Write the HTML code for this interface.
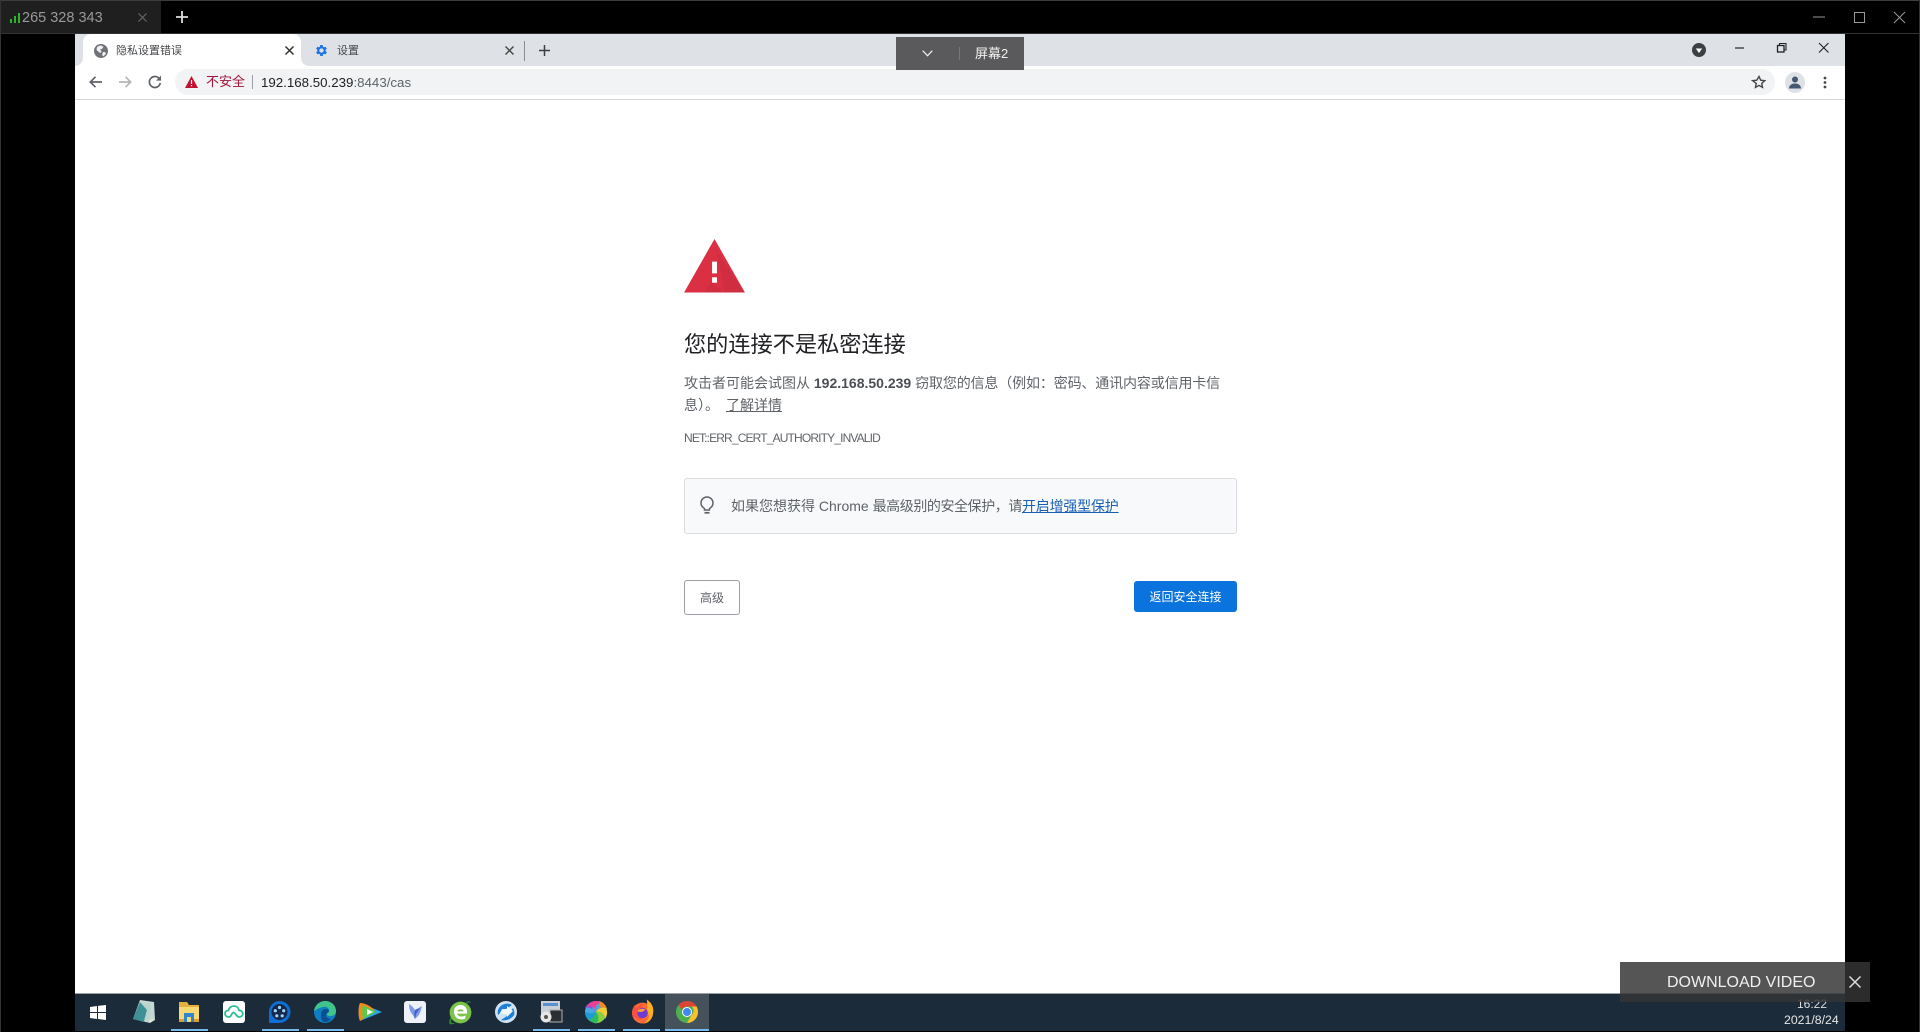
<!DOCTYPE html>
<html lang="zh"><head><meta charset="utf-8"><title>隐私设置错误</title>
<style>
*{margin:0;padding:0;box-sizing:border-box}
html,body{width:1920px;height:1032px;overflow:hidden;background:#000}
body{position:relative;font-family:"Liberation Sans","Noto Sans CJK SC",sans-serif;color:#202124;filter:blur(.3px)}
.a{position:absolute;white-space:nowrap}
svg{position:absolute;overflow:visible}
</style></head><body>
<!-- outer frame -->
<div class="a" style="left:0;top:0;width:1920px;height:1px;background:#3c3c3c"></div>
<div class="a" style="left:0;top:1px;width:161px;height:32px;background:#1f1f1f"></div>
<div class="a" style="left:0;top:33px;width:1920px;height:1px;background:#333"></div>
<div class="a" style="left:0;top:0;width:1px;height:1032px;background:#333"></div>
<div class="a" style="left:1919px;top:0;width:1px;height:1032px;background:#333"></div>
<svg style="left:9px;top:11px" width="12" height="13"><path d="M1 8h2v4H1zM5 5h2v7H5zM9 2h2v10H9z" fill="#2fb32f"/></svg>
<div class="a" style="left:22px;top:2px;line-height:33px;font-size:14.5px;color:#999">265 328 343</div>
<svg style="left:138px;top:13px" width="9" height="9"><path d="M.5.5l8 8M8.500.5l-8 8" stroke="#666" stroke-width="1.200"/></svg>
<svg style="left:176px;top:11px" width="12" height="12"><path d="M6 0v12M0 6h12" stroke="#ddd" stroke-width="1.800"/></svg>
<svg style="left:1813px;top:16px" width="12" height="2"><path d="M0 1h12" stroke="#999"/></svg>
<svg style="left:1854px;top:12px" width="10" height="10"><rect x=".5" y=".5" width="10" height="10" fill="none" stroke="#999"/></svg>
<svg style="left:1894px;top:12px" width="10" height="10"><path d="M0 0l11 11M11 0L0 11" stroke="#999"/></svg>

<!-- chrome window -->
<div class="a" style="left:75px;top:34px;width:1770px;height:959px;background:#fff"></div>
<div class="a" style="left:75px;top:34px;width:1770px;height:32px;background:#dee1e6"></div>
<div class="a" style="left:83px;top:34px;width:218px;height:32px;background:#fff;border-radius:8px 8px 0 0"></div>
<div class="a" style="left:75px;top:58px;width:8px;height:8px;background:#fff"></div>
<div class="a" style="left:75px;top:58px;width:8px;height:8px;background:#dee1e6;border-radius:0 0 8px 0"></div>
<div class="a" style="left:301px;top:58px;width:8px;height:8px;background:#fff"></div>
<div class="a" style="left:301px;top:58px;width:8px;height:8px;background:#dee1e6;border-radius:0 0 0 8px"></div>
<svg style="left:94px;top:44px" width="14" height="14" viewBox="0 0 14 14"><circle cx="7" cy="7" r="7" fill="#6f7276"/><path d="M7 1.500c-1.500 0-3 .7-4 1.800L2.500 6l3 2.500 1 .5 1-1.500L6 5.500 8 5l1.500-2.200zM9 8l-1 3 1.500 1.300 2.500-2.500L11 8z" fill="#fff" opacity=".9"/></svg>
<div class="a" style="left:116px;top:41px;line-height:20px;font-size:11px;color:#45474a">隐私设置错误</div>
<svg style="left:285px;top:46px" width="9" height="9"><path d="M.5.500l8 8M8.500.500l-8 8" stroke="#333" stroke-width="1.500"/></svg>
<svg style="left:314px;top:43px" width="15" height="15" viewBox="0 0 24 24"><path fill="#1a73e8" d="M19.400 13a7.500 7.500 0 000-2l2.100-1.600-2-3.500-2.500 1a7.500 7.500 0 00-1.700-1L15 3.200h-4l-.4 2.700a7.500 7.500 0 00-1.700 1l-2.500-1-2 3.500L6.500 11a7.500 7.500 0 000 2l-2.100 1.600 2 3.500 2.500-1a7.500 7.500 0 001.700 1l.4 2.700h4l.4-2.700a7.500 7.500 0 001.700-1l2.500 1 2-3.500zM13 15.500a3.500 3.500 0 110-7 3.500 3.500 0 010 7z" transform="translate(-1 0)"/></svg>
<div class="a" style="left:337px;top:41px;line-height:20px;font-size:11px;color:#45474a">设置</div>
<svg style="left:505px;top:46px" width="9" height="9"><path d="M.5.500l8 8M8.500.500l-8 8" stroke="#444" stroke-width="1.400"/></svg>
<div class="a" style="left:524px;top:41px;width:1px;height:20px;background:#8a8d91"></div>
<svg style="left:539px;top:45px" width="11" height="11"><path d="M5.500 0v11M0 5.500h11" stroke="#3c4043" stroke-width="1.500"/></svg>

<svg style="left:1692px;top:43px" width="14" height="14"><circle cx="7" cy="7" r="7" fill="#3c4043"/><path d="M3.800 5.500h6.400L7 10z" fill="#fff"/></svg>
<svg style="left:1735px;top:47px" width="10" height="2"><path d="M0 1h9" stroke="#333" stroke-width="1.300"/></svg>
<svg style="left:1777px;top:43px" width="10" height="10"><path d="M2.500 2V.5h6.500V7H7.500" fill="none" stroke="#222" stroke-width="1.100"/><rect x=".5" y="2.500" width="6.500" height="6.500" fill="none" stroke="#222" stroke-width="1.300"/></svg>
<svg style="left:1819px;top:43px" width="9" height="9"><path d="M0 0l9.500 9.500M9.500 0L0 9.500" stroke="#222" stroke-width="1.100"/></svg>

<!-- toolbar -->
<svg style="left:89px;top:76px" width="13" height="12"><path d="M13 6H1.500M6.500 .8L1.300 6l5.200 5.200" fill="none" stroke="#5f6368" stroke-width="1.700"/></svg>
<svg style="left:119px;top:76px" width="13" height="12"><path d="M0 6h11.500M6.500 .8L11.700 6l-5.200 5.200" fill="none" stroke="#b4b6b9" stroke-width="1.700"/></svg>
<svg style="left:148px;top:75px" width="14" height="14" viewBox="0 0 14 14"><path d="M11.800 4.500A5.500 5.500 0 1012.300 8" fill="none" stroke="#5f6368" stroke-width="1.700"/><path d="M13 .6v5H8z" fill="#5f6368"/></svg>
<div class="a" style="left:175px;top:69px;width:1600px;height:26px;background:#f1f3f4;border-radius:13px"></div>
<svg style="left:185px;top:76px" width="13" height="12"><path d="M6.500 0L13 12H0z" fill="#c5102f"/><path d="M5.900 4h1.200v4H5.900zM5.900 9h1.200v1.300H5.900z" fill="#fff"/></svg>
<div class="a" style="left:206px;top:72px;line-height:20px;font-size:13px;color:#a5143c">不安全</div>
<div class="a" style="left:252px;top:75px;width:1px;height:14px;background:#9aa0a6"></div>
<div class="a" style="left:261px;top:73px;line-height:20px;font-size:13.300px;color:#202124">192.168.50.239<span style="color:#5f6368">:8443/cas</span></div>
<svg style="left:1752px;top:75px" width="14" height="14" viewBox="0 0 24 24"><path d="M12 2.500l2.900 6.400 7 .8-5.200 4.700 1.400 6.900-6.100-3.500-6.100 3.500 1.400-6.900L1.100 9.700l7-.8z" fill="none" stroke="#45474a" stroke-width="2.400"/></svg>
<div class="a" style="left:1785px;top:72px;width:20px;height:21px;border-radius:50%;background:#dee1e6"></div>
<svg style="left:1789px;top:76px" width="12" height="13"><circle cx="6" cy="3.500" r="3" fill="#44586f"/><path d="M0 12.500c0-3.500 3-5 6-5s6 1.500 6 5z" fill="#44586f"/></svg>
<svg style="left:1823px;top:76px" width="4" height="13"><circle cx="2" cy="2" r="1.400" fill="#45474a"/><circle cx="2" cy="6.500" r="1.400" fill="#45474a"/><circle cx="2" cy="11" r="1.400" fill="#45474a"/></svg>
<div class="a" style="left:75px;top:99px;width:1770px;height:1px;background:#d6d8da"></div>

<!-- interstitial -->
<svg style="left:684px;top:239px" width="61" height="54" viewBox="0 0 62 55"><path d="M31 0L0 54.500h62z" fill="#db3044"/><path d="M33.500 13l8 41.500h20zM28 43l11.500 11.500H20z" fill="#c62c3f" opacity=".55"/><path d="M28.500 23h5v12h-5zM28.500 39h5v5.500h-5z" fill="#fff"/></svg>
<div class="a" style="left:684px;top:329px;line-height:32px;font-size:22.200px;color:#202124">您的连接不是私密连接</div>
<div class="a" style="left:684px;top:372px;line-height:22px;font-size:14px;color:#5f6368">攻击者可能会试图从 <b style="color:#4b4f54">192.168.50.239</b> <span style="letter-spacing:-.14px">窃取您的信息（例如：密码、通讯内容或信用卡信</span><br>息）。<u style="margin-left:7px">了解详情</u></div>
<div class="a" style="left:684px;top:430px;line-height:16px;font-size:12px;color:#5f6368;letter-spacing:-.85px">NET::ERR_CERT_AUTHORITY_INVALID</div>
<div class="a" style="left:684px;top:478px;width:553px;height:56px;background:#f8f9fa;border:1px solid #dadce0;border-radius:3px"></div>
<svg style="left:700px;top:496px" width="14" height="19" viewBox="0 0 14 19"><path d="M4.500 12.500C2.500 11.300 1 9.500 1 7a6 6 0 0112 0c0 2.500-1.500 4.300-3.500 5.500v1.500h-5z" fill="none" stroke="#5f6368" stroke-width="1.500"/><path d="M4.500 16.800h5" stroke="#5f6368" stroke-width="1.700"/></svg>
<div class="a" style="left:731px;top:496px;line-height:20px;font-size:14px;color:#5f6368">如果您想获得 Chrome <span style="letter-spacing:-.42px">最高级别的安全保护，请</span><u style="color:#1a5fb4;letter-spacing:-.2px">开启增强型保护</u></div>
<div class="a" style="left:684px;top:580px;width:56px;height:35px;border:1px solid #9aa0a6;border-radius:3px;background:#fff;text-align:center;line-height:34px;font-size:12px;color:#5f6368">高级</div>
<div class="a" style="left:1134px;top:581px;width:103px;height:31px;border-radius:3px;background:#0b73dd;text-align:center;line-height:32px;font-size:12px;color:#fff">返回安全连接</div>

<!-- screen selector -->
<div class="a" style="left:896px;top:37px;width:128px;height:33px;background:#5a5a5c"></div>
<svg style="left:922px;top:50px" width="11" height="7"><path d="M.7.700l4.800 5 4.800-5" fill="none" stroke="#eee" stroke-width="1.200"/></svg>
<div class="a" style="left:959px;top:47px;width:1px;height:13px;background:#777"></div>
<div class="a" style="left:975px;top:44px;line-height:20px;font-size:13px;color:#f2f2f2">屏幕2</div>

<!-- taskbar -->
<div class="a" style="left:75px;top:993px;width:1770px;height:38px;background:#1c2b39;border-top:1px solid #9aa0a6"></div>
<div class="a" style="left:665px;top:994px;width:44px;height:37px;background:#45525c"></div>
<div class="a" style="left:171px;top:1029px;width:37px;height:2px;background:#76b9ed"></div>
<div class="a" style="left:262px;top:1029px;width:37px;height:2px;background:#76b9ed"></div>
<div class="a" style="left:307px;top:1029px;width:37px;height:2px;background:#76b9ed"></div>
<div class="a" style="left:533px;top:1029px;width:37px;height:2px;background:#76b9ed"></div>
<div class="a" style="left:578px;top:1029px;width:37px;height:2px;background:#76b9ed"></div>
<div class="a" style="left:623px;top:1029px;width:37px;height:2px;background:#76b9ed"></div>
<div class="a" style="left:665px;top:1029px;width:44px;height:2px;background:#76b9ed"></div>

<svg style="left:90px;top:1005px" width="16" height="15"><path d="M0 2l7-1v6H0zM8 .9L16 0v7H8zM0 8h7v6l-7-1zM8 8h8v7l-8-1z" fill="#fff"/></svg>
<svg style="left:133px;top:1000px" width="22" height="24" viewBox="0 0 22 24"><path d="M7 0l14 2 1 18-5 3L0 19z" fill="#c5d8d4"/><path d="M7 2L0 19l11 3 3-12z" fill="#3f8f96"/><path d="M8 3l10 1-1 15-6 2 3-11z" fill="#b9d4cf"/><path d="M16 20l5-1-4 4z" fill="#e8e6c0"/></svg>
<svg style="left:179px;top:1000px" width="20" height="23"><path d="M0 2h8l2 3h10v17H0z" fill="#e5b040"/><path d="M0 7h20v15H0z" fill="#f9d976"/><path d="M5 13h10v9h-3v-5H8v5H5z" fill="#2f86cc"/><path d="M0 19h5v3H0zM15 19h5v3h-5z" fill="#e0a030"/></svg>
<svg style="left:223px;top:1001px" width="22" height="22"><rect width="22" height="22" rx="3" fill="#fff"/><path d="M6 16c-2.500 0-4-1.500-4-3.500S3.500 9.500 5.500 9.500C6 6.500 8.500 5 11 5s4.500 1.700 5 4.300c2.200 .2 3.800 1.500 3.800 3.500S18 16 16 16c-2.500 0-3.500-4.500-5.500-4.500S8.500 16 6 16z" fill="none" stroke="#2fbf94" stroke-width="1.800"/></svg>
<svg style="left:268px;top:1001px" width="23" height="24"><path d="M11.500 0a11 11 0 110 22H1v-10.500A11 11 0 0111.500 0z" fill="#0b6fd6"/><circle cx="11.500" cy="11" r="8" fill="#16284a"/><g fill="#9ed3f5"><circle cx="11.500" cy="6.500" r="1.600"/><circle cx="7.300" cy="9.700" r="1.600"/><circle cx="15.700" cy="9.700" r="1.600"/><circle cx="8.800" cy="14.800" r="1.600"/><circle cx="14.200" cy="14.800" r="1.600"/></g></svg>
<svg style="left:314px;top:1001px" width="22" height="22" viewBox="0 0 22 22"><circle cx="11" cy="11" r="11" fill="#0f7fc4"/><path d="M0 10C1 3 7 0 11 0c6 0 11 4 11 10 0 4-3 5-6 5-2 0-3-1-3-2 0-2 2-2 2-4 0-2-3-4-6-3C5 7 3 8 0 10z" fill="#3fc48b"/><path d="M7 13c0-3 2-5 5-5 2 0 3 1 3 2 0 2-3 2-3 4 0 2 2 4 5 4-2 2-4 3-6 3-4 0-4-5-4-8z" fill="#0a4f8f"/></svg>
<svg style="left:358px;top:1002px" width="24" height="20" viewBox="0 0 24 20"><path d="M2 1l22 9L2 19C0 14 0 6 2 1z" fill="#2aa5e6"/><path d="M2 1c6 0 14 5 15 9l-9 5-6 4C0 14 0 6 2 1z" fill="#f38b1c"/><path d="M5 3l13 7-13 7c-1-4-1-10 0-14z" fill="#5cc94a"/><path d="M9 7l6 3-6 3z" fill="#fff"/></svg>
<svg style="left:404px;top:1001px" width="22" height="22" viewBox="0 0 22 22"><rect width="22" height="22" rx="3" fill="#eef1f8"/><path d="M5 3c3 2 5 4 6 6l7-4c-1 4-2 8-4 10-1 1-2 2-3 3-1-2-2-4-3-5C6 11 5 7 5 3z" fill="#7f9be6"/><path d="M11 9l5-2-4 6-1 5c-1-3-1-6 0-9z" fill="#3f60c9"/></svg>
<svg style="left:448px;top:1000px" width="25" height="25" viewBox="0 0 22 23"><circle cx="11" cy="11.500" r="10" fill="#7cc34a"/><path d="M5 10.500a6 6 0 0112 0v2H8c.5 3 5 3.500 7.500 1.500v3c-4 2-10.500 .5-10.500-6.500zm3 0h6c-.5-2.500-5.500-2.500-6 0z" fill="#fff"/><path d="M1 22c-1-2 0-4 1-6l1 1c-.5 1.500-1 3 0 4 2 .5 4-.5 3 0-1 1-4 2-5 1zM16 2c2-1 4-1 5 0-1 0-3 .5-4 1z" fill="#2b8a2d"/></svg>
<svg style="left:495px;top:1001px" width="22" height="22" viewBox="0 0 22 22"><circle cx="11" cy="11" r="11" fill="#cfe3f3"/><path d="M3 14C1 7 8 1 15 3c1 .5 2 1 2 1l-6 4H7l-2 4zM6 19c3 1 10 0 13-5 1-2 0-5-1-7l-6 8z" fill="#1c7ed6"/><path d="M5 12c2-3 4-4 7-4V5l6 5-6 6v-3c-3 0-5 0-7-1z" fill="#f4f8fb"/></svg>
<svg style="left:540px;top:1001px" width="22" height="22" viewBox="0 0 22 22"><rect x="1" y="0" width="19" height="15" fill="#c9cfd6"/><rect x="3" y="2" width="15" height="3" fill="#5a8fd0"/><rect x="10" y="9" width="12" height="12" fill="#2b2f33" stroke="#b0b0b0"/><circle cx="6" cy="16" r="5.500" fill="#e6e6e6"/><circle cx="6" cy="16" r="2" fill="#555"/></svg>
<svg style="left:585px;top:1001px" width="22" height="22" viewBox="0 0 22 22"><circle cx="11" cy="11" r="11" fill="#4aa8e0"/><path d="M11 11C6 9 6 3 11 0c-5 0-9 3-11 7 3-1 7 0 11 4z" fill="#8d4fd6"/><path d="M11 11C9 6 12 1 18 2 15 0 13 0 11 0 7 0 3 3 2 6c4-2 8 0 9 5z" fill="#ef3f8f"/><path d="M11 11c2-5 7-6 11-3-1-4-4-7-8-8 2 4 0 8-3 11z" fill="#f58a1f"/><path d="M11 11c5-1 9 2 9 7 2-3 3-7 1-11-3-1-8 0-10 4z" fill="#f7cf2d"/><path d="M11 11c3 3 2 8-2 11 4 1 8-1 11-5 0-4-5-7-9-6z" fill="#8ccf3f"/><path d="M11 11c-1 4-5 6-9 5 2 4 6 6 10 6 2-3 2-8-1-11z" fill="#2dbb5e"/><path d="M11 11c-4 2-8 1-11 0 0 2 1 5 3 7 4 1 7-3 8-7z" fill="#1e9bd7"/></svg>
<svg style="left:631px;top:999px" width="23" height="25" viewBox="0 0 22 23"><circle cx="11" cy="13" r="10" fill="#ff6a35"/><path d="M15 0c6 4 7 9 6 14-1 5-5 9-9 9 5-2 6-7 4-11-1-3 0-9-1-12z" fill="#ffb01f"/><path d="M1 13c0-3 1-6 3-8 0 2 1 3 2 3 1-2 3-3 5-4-1 2-1 3 1 4-3-1-6 1-6 4 0 4 3 6 6 6-6 2-11-1-11-5z" fill="#f9503f"/><circle cx="11" cy="13" r="5" fill="#6d3bd1"/><path d="M6 11c2-2 5-3 8-1-2 1-3 2-4 2-1 0-3 0-4-1z" fill="#f9a03f"/></svg>
<svg style="left:676px;top:1001px" width="22" height="22" viewBox="0 0 22 22"><circle cx="11" cy="11" r="11" fill="#4caf50"/><path d="M11 0a11 11 0 019.500 5.500H11a5.500 5.500 0 00-5 3.200L2.300 4.300A11 11 0 0111 0z" fill="#dc4437"/><path d="M20.500 5.500A11 11 0 0111 22l4.700-8.200a5.500 5.500 0 000-8.300z" fill="#fbc02d"/><circle cx="11" cy="11" r="5" fill="#fff"/><circle cx="11" cy="11" r="4" fill="#4285f4"/></svg>

<div class="a" style="left:1797px;top:997px;line-height:14px;font-size:12px;color:#ddd">16:22</div>
<div class="a" style="left:1784px;top:1013px;line-height:14px;font-size:12.300px;color:#e6e6e6">2021/8/24</div>

<!-- download overlay -->
<div class="a" style="left:1620px;top:962px;width:250px;height:40px;background:rgba(53,53,53,.84)"></div>
<div class="a" style="left:1667px;top:973px;line-height:20px;font-size:16px;color:#f0f0f0">DOWNLOAD VIDEO</div>
<svg style="left:1849px;top:976px" width="12" height="12"><path d="M.5.500l11 11M11.500.500l-11 11" stroke="#ddd" stroke-width="1.500"/></svg>
</body></html>
